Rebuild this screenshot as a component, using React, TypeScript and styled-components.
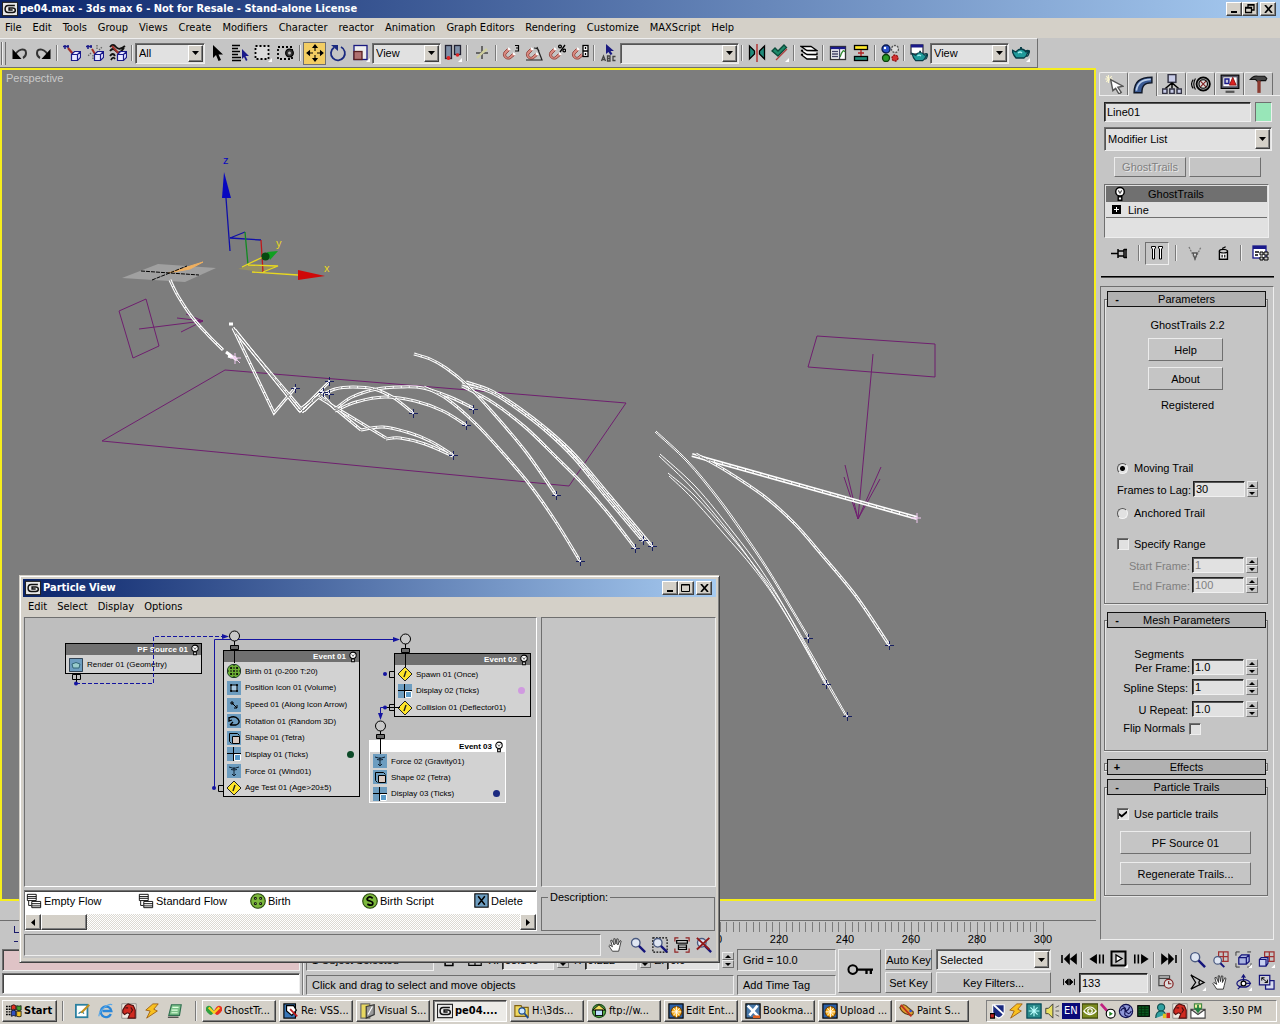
import React from 'react';
import styled, { createGlobalStyle, css } from 'styled-components';

const panelFont = '"Liberation Sans", Arial, sans-serif';
const shellFont = '"DejaVu Sans Condensed", "DejaVu Sans", Tahoma, sans-serif';
const C = {
  face: '#c5c5c5',
  shell: '#d4d0c8',
  field: '#e1e1e1',
  dark: '#6f6f6f',
  wire: '#1414a0',
  node: '#6d9dc0',
};

const Global = createGlobalStyle`
  * { box-sizing: border-box; }
  body { margin: 0; background: ${C.face}; overflow: hidden; }
  button, input, select { font: inherit; color: inherit; margin: 0; }
  svg { display: block; flex: none; }
`;

const raised = css`
  border: 1px solid;
  border-color: #ececec ${C.dark} ${C.dark} #ececec;
`;
const sunken = css`
  border: 1px solid;
  border-color: ${C.dark} #eeeeee #eeeeee ${C.dark};
`;
const classic = css`
  background: ${C.shell};
  border: 1px solid;
  border-color: #fff #404040 #404040 #fff;
  box-shadow: inset -1px -1px #808080;
`;

/* ---------- shell ---------- */
const Page = styled.div`
  position: relative;
  display: flex;
  flex-direction: column;
  min-height: 100vh;
  background: ${C.face};
  color: #000;
  font: 11px/14px ${panelFont};
`;
const TitleBar = styled.header`
  display: flex;
  align-items: center;
  gap: 2px;
  height: 18px;
  padding: 0 4px 0 2px;
  background: linear-gradient(90deg, #0a246a, #a6caf0);
  color: #fff;
  font: bold 11px/18px ${shellFont};
`;
const TitleText = styled.h1`
  flex: 1;
  margin: 0;
  font: inherit;
  white-space: nowrap;
`;
const CapGroup = styled.div`
  display: flex;
`;
const CapButton = styled.button<{ $gap?: boolean }>`
  ${classic}
  display: grid;
  place-items: center;
  width: 16px;
  height: 14px;
  padding: 0;
  margin-left: ${(p) => (p.$gap ? 2 : 0)}px;
`;
const MenuBar = styled.nav<{ $gap: number }>`
  display: flex;
  align-items: center;
  gap: ${(p) => p.$gap}px;
  height: 20px;
  padding-left: 5px;
  background: ${C.shell};
  font: 11px/14px ${shellFont};
`;
const MenuItem = styled.button`
  border: 0;
  background: none;
  padding: 0;
  white-space: nowrap;
`;

/* ---------- toolbar ---------- */
const ToolRow = styled.div`
  display: flex;
  height: 30px;
  background: ${C.face};
`;
const Toolbar = styled.div`
  display: flex;
  align-items: center;
  padding: 0 5px 0 2px;
  border-top: 1px solid #eee;
  border-right: 1px solid ${C.dark};
  border-bottom: 1px solid ${C.dark};
`;
const Grip = styled.span`
  width: 4px;
  height: 23px;
  margin-right: 2px;
  border: 1px solid;
  border-color: #eee ${C.dark} ${C.dark} #eee;
  border-width: 0 1px;
  box-shadow: -1px 0 ${C.dark};
`;
const ToolButton = styled.button<{ $on?: boolean; $w?: number }>`
  display: grid;
  place-items: center;
  width: ${(p) => p.$w ?? 23}px;
  height: 23px;
  padding: 1px 1px 2px 2px;
  border: 1px solid ${(p) => (p.$on ? C.dark : 'transparent')};
  background: ${(p) => (p.$on ? '#f2cd63' : 'none')};
`;
const Sep = styled.span<{ $h?: number }>`
  flex: none;
  width: 2px;
  height: ${(p) => p.$h ?? 16}px;
  margin: 0 2px;
  background: linear-gradient(90deg, #7a7a7a 50%, #eee 50%);
`;
const SelectFrame = styled.span<{ $w?: number; $h: number }>`
  ${sunken}
  display: flex;
  width: ${(p) => (p.$w ? `${p.$w}px` : 'auto')};
  height: ${(p) => p.$h}px;
  padding: 1px;
  background: ${C.field};
  box-shadow: inset 1px 1px #555;
`;
const NativeSelect = styled.select`
  flex: 1;
  min-width: 0;
  appearance: none;
  border: 0;
  background: none;
  padding: 0 2px;
  outline: 0;
`;
const SelectArrow = styled.span`
  ${classic}
  display: grid;
  place-items: center;
  width: 15px;
  pointer-events: none;
`;
const Select = ({ label, value, w, h }: { label: string; value: string; w?: number; h: number }) => (
  <SelectFrame $w={w} $h={h}>
    <NativeSelect aria-label={label} defaultValue={value}>
      <option>{value}</option>
    </NativeSelect>
    <SelectArrow>
      <svg width="7" height="4"><path d="M0 0h7L3.5 4z" /></svg>
    </SelectArrow>
  </SelectFrame>
);

/* ---------- icons ---------- */
const Svg = ({ s = 18, children }: { s?: number; children: React.ReactNode }) => (
  <svg width={s} height={s} viewBox="0 0 18 18" fill="none" stroke="#000" strokeWidth="1.3" aria-hidden="true">
    {children}
  </svg>
);
const flyout = <path d="M18 14v4h-4z" fill="#fff" stroke="none" />;
const magnet = (
  <g>
    <path d="M8 15C3 16 0 12 2 8l4-4 2 2-4 4c-1 2 1 4 3 3l4-4 2 2z" fill="#d98a80" stroke="#8a3a34" strokeWidth=".8" />
    <path d="M6 4l2 2M11 9l2 2" stroke="#fff" strokeWidth="2" />
  </g>
);
const teapot = (
  <g>
    <path d="M4 8L0 6q1 5 4 8h8q3-2 3-4l3-3-4 1q-2-3-5-3T4 8z" fill="#1f9a9a" stroke="#063c46" />
    <path d="M13 7q5-2 4 2t-3 3" stroke="#063c46" />
    <path d="M8 4h2M9 3v2" stroke="#063c46" strokeWidth="1.6" />
    <path d="M6 9q2-2 4 0" stroke="#a8f0f0" />
  </g>
);
const cube = <path d="M8.500 10.500l3-3h6v6l-3 3h-6zM8.500 10.500h6v6M14.500 10.500l3-3" fill="#e8e8ff" stroke="#1a1a8a" strokeWidth="1.2" />;
const hand = (
  <path d="M5 16L1 10l1-1 3 2-2-7 1.500-.5L7 9 6.500 2 8 2l1 6 1-6 1.500.3L11 9l2.500-5 1.300.6L13 12l-1 4z" fill="#fff" stroke="#222" strokeWidth=".9" />
);
const mag = (
  <g>
    <circle cx="6.500" cy="6.500" r="4.800" fill="#dfe6f2" stroke="#4a5a80" strokeWidth="1.5" />
    <path d="M10 10l7 7" stroke="#14147a" strokeWidth="2.6" />
  </g>
);

const icons: Record<string, React.ReactNode> = {
  undo: <><path d="M4 12C6 5 15 3 15 9c0 2-1 4-3 5" stroke="#333" strokeWidth="2" /><path d="M1.500 5v10h9z" fill="#000" stroke="none" /></>,
  redo: <><path d="M14 12C12 5 3 3 3 9c0 2 1 4 3 5" stroke="#333" strokeWidth="2" /><path d="M16.500 5v10h-9z" fill="#000" stroke="none" /></>,
  link: <><path d="M0 2.500h6M2 1v4M5 1v3" stroke="#1a1a8a" strokeWidth="1.500" /><path d="M5 4l5 6" stroke="#a0302a" strokeWidth="2.200" />{cube}</>,
  unlink: <><path d="M0 2.500h6M2 1v4M5 1v3" stroke="#1a1a8a" strokeWidth="1.500" /><path d="M6 5l3 5" stroke="#a0302a" strokeWidth="2" /><path d="M11 1v4M13 6l3-3M5 9l-3 3M7 11v4" stroke="#666" strokeDasharray="1.500 1" />{cube}</>,
  bind: <><path d="M1 3q3-4 6 0t9-1M1 7q3-4 6 0t8-3M1 12q3-4 5 0M2 16q2-4 4-1" stroke="#111" strokeWidth="1.800" /><path d="M3 2l8 9" stroke="#a0302a" strokeWidth="2" />{cube}</>,
  arrow: <path d="M5 1v13l3-3 2.500 6 2.500-1-2.500-5.500H15z" fill="#000" stroke="none" />,
  byname: <><path d="M1 1.500h8M1 4.500h6M1 7.500h8M1 10.500h6M1 13.500h9M1 16.500h9" strokeWidth="1.400" /><path d="M11 5v10l2-2 2 4 1.500-1-2-4H18z" fill="#1a1a8a" stroke="none" /></>,
  rect: <><rect x="1.500" y="2" width="13" height="13" fill="#dcdcdc" strokeWidth="1.800" strokeDasharray="2 2" />{flyout}</>,
  crossing: <><rect x="1" y="3" width="14" height="12" strokeWidth="1.800" strokeDasharray="2 2" /><circle cx="12.500" cy="9" r="3.800" fill="#333" stroke="#000" /><circle cx="12.500" cy="9" r="1.500" fill="#bbb" stroke="none" /></>,
  move: <path d="M9 2v5M9 11v5M2 9h5M11 9h5M7 3.500L9 1l2 2.500zM7 14.500L9 17l2-2.500zM3.500 7L1 9l2.500 2zM14.500 7L17 9l-2.500 2z" fill="#000" strokeWidth="1.100" />,
  rotate: <><path d="M5 3.500a7 7 0 1 0 7-.5" stroke="#1a2a80" strokeWidth="1.800" /><path d="M2 1h7v6z" fill="#1a2a80" stroke="none" /></>,
  scale: <><rect x="2" y="1.500" width="13" height="14" fill="#eee" stroke="#1a1a80" /><rect x="2" y="7.500" width="8" height="8" fill="#b07070" stroke="#5a2020" />{flyout}</>,
  pivot: <><rect x="1.500" y="1.500" width="6" height="13" fill="#7f90a8" stroke="#223" /><rect x="10.500" y="1.500" width="6" height="9" fill="#7f90a8" stroke="#223" /><circle cx="4.500" cy="14" r="2" fill="#d22" stroke="none" /><circle cx="13.500" cy="11" r="1.800" fill="#d22" stroke="none" />{flyout}</>,
  manip: <><path d="M9 2v13M3 9h12" stroke="#666" strokeWidth="2" /><path d="M9 9l5-4M9 9l-5 5" stroke="#d0d0a0" strokeWidth="2.400" /></>,
  snap: <>{magnet}<path d="M13 1.500h3.500v5.500H13M14 4h2.500" strokeWidth="1.200" /></>,
  angle: <>{magnet}<path d="M1 16h16L12 3M9 4q4 0 5 3" stroke="#222" strokeWidth="1.200" /></>,
  percent: <>{magnet}<path d="M17 1l-5 7" /><circle cx="12" cy="2.500" r="1.400" /><circle cx="16.300" cy="6.500" r="1.400" /></>,
  spinsnap: <>{magnet}<rect x="12" y="1.500" width="5" height="11" fill="#fff" /><path d="M12 7h5M14.500 3v2M14.500 9v2" /></>,
  abc: <><path d="M6 0v10l2.500-2 2 3 2-1-2-3H14z" fill="#1a1a80" stroke="none" /><path d="M1.500 17L3.500 12l2 5M2.500 15.500h2.500M7.500 12v5H10v-5zM7.500 14.500H10M15.500 12.500H13v4h2.500" stroke="#444" /></>,
  mirror: <><path d="M1.500 2v13l5-5V7z" fill="#1f8a7a" /><path d="M16.500 2v13l-5-5V7z" fill="#1f8a7a" /><path d="M9 0v18" stroke="#b02020" /></>,
  align: <><path d="M1 7l3-3 3 3 6-6 2.500 2.500L7 12z" fill="#1f8a6a" stroke="#0a4a3a" /><path d="M5 16L16 5" stroke="#b04040" />{flyout}</>,
  layers: <path d="M1 2.500h10l6 4H7zM1 6.500L7 10.500h10v-2M1 10.500l6 4.500h10v-3M1 6.500h2M1 10.500h2" fill="#fff" />,
  curve: <><rect x="1.500" y="2.500" width="15" height="13" fill="#fff" stroke="#333" /><path d="M1.500 4h15" stroke="#1a1a8a" strokeWidth="2.400" /><path d="M3 7.500h6M3 10h6M3 12.500h6M10.500 5v10" stroke="#446" /><path d="M11 13q3-9 5-5" stroke="#383" /></>,
  schem: <><rect x="2.500" y="1.500" width="13" height="4" fill="#ffe92a" /><rect x="2.500" y="12.500" width="13" height="4" fill="#1f8a7a" /><path d="M9 6v6M6 9h6" stroke="#b02020" /></>,
  material: <><circle cx="5" cy="5" r="4" fill="#2a50c8" stroke="#0a1a50" /><circle cx="14" cy="5" r="3.500" fill="#ddd" stroke="#555" strokeDasharray="2 1" /><circle cx="5" cy="14" r="3.500" fill="#2a9a2a" stroke="#0a400a" /><circle cx="14" cy="14" r="3" fill="#d23030" stroke="#901010" strokeDasharray="2 1" /><circle cx="4" cy="4" r="1.200" fill="#fff" stroke="none" /></>,
  render: <><rect x="1" y="1" width="12" height="9" fill="#fff" stroke="#334" /><path d="M1 2h12" stroke="#1a1a8a" strokeWidth="3" /><g transform="translate(2 4) scale(.9)">{teapot}</g></>,
  teapot: <>{teapot}{flyout}</>,
  create: <><path d="M4 1v7M1 4.500h7M2 2l5 5M7 2L2 7" stroke="#fbf6d0" strokeWidth="1" /><path d="M6 5l11 6-4.500 1 3 4.500-2 1.500-3-5L8 15z" fill="#fff" stroke="#555" /></>,
  modify: <><path d="M1 16C1 6 6 2 17 2v5C10 7 8 10 8 16z" fill="#3a5a94" stroke="#101828" /><path d="M3 14C4 7 8 4 16 4" stroke="#b8cce8" strokeWidth="1.600" /></>,
  hierarchy: <><rect x="5.500" y=".5" width="7" height="7" fill="#c8cce8" stroke="#334" /><path d="M9 8v5M9 8L3 13M9 8l6 5" /><path d="M.5 13.500h4v4h-4zM7 13.500h4v4H7zM13.500 13.500h4v4h-4z" fill="#c8cce8" stroke="#334" /></>,
  motion: <><path d="M4 4Q1 9 4 14M2 5Q-1 9 2 13" strokeWidth="1" /><circle cx="11" cy="9" r="6" strokeWidth="1.600" fill="#aaa" /><circle cx="11" cy="9" r="3.800" fill="#ddd" strokeWidth="1" /><path d="M8.500 6.500l5 5M13.500 6.500l-5 5" stroke="#802020" strokeWidth="1" /></>,
  display: <><rect x="1" y="1" width="16" height="12" fill="#556" strokeWidth="1" /><rect x="3" y="3" width="12" height="8" fill="#fff" stroke="none" /><path d="M4.500 4.500h3.500v4H4.500z" fill="#ccd" stroke="#1a1a8a" /><path d="M11.500 3l3 7h-6z" fill="#d22" stroke="#811" strokeWidth=".8" /><path d="M5 16h8" stroke="#555" strokeWidth="2" /></>,
  hammer: <><path d="M1 5q3-4 7-3h6l2 2-1 2h-4l-3 1-2-2z" fill="#444" stroke="#111" strokeWidth="1" /><path d="M9 6v11" stroke="#8a3a30" strokeWidth="3" /></>,
  bulb: <><circle cx="9" cy="6.500" r="4.800" fill="#fff" strokeWidth="1.600" /><path d="M7 5l2 3 2-3" stroke="#555" /><path d="M7 12h4v4H7z" fill="#fff" strokeWidth="1.600" /></>,
  pin: <path d="M0 9.500h7M7 5v9M7 7h6v5H7M13 5v9M15 5v9M13 5.500h3M13 13.500h3" strokeWidth="1.500" />,
  result: <path d="M3.500 2.500h4v1.500l-1 1v10h-2V5l-1-1zM10.500 2.500h4v1.500l-1 1v10h-2V5l-1-1z" fill="#fff" strokeWidth="1" />,
  unique: <><path d="M3 3l6 12 6-12" stroke="#777" strokeDasharray="2 1" /><path d="M7 9h4l-2 6z" fill="#fff" stroke="#555" /></>,
  trash: <><path d="M5 7h9v9H5z" fill="#fff" strokeWidth="1.600" /><ellipse cx="9.500" cy="7" rx="4.500" ry="2" fill="#ccc" strokeWidth="1.400" /><path d="M8 4l4-2M8 11v3M11 11v3" /></>,
  config: <><rect x="2" y="2" width="13" height="12" fill="#fff" stroke="#1a1a8a" /><path d="M2 3.500h13" stroke="#1a1a8a" strokeWidth="3" /><path d="M4 8h4M4 11h3" /><path d="M9 8h3v3H9zM13 8h4v3h-4zM9 13h3v3H9zM13 13h4v3h-4z" fill="#ccc" strokeWidth="1" /></>,
  hand, mag,
  magrect: <><rect x="1" y="1" width="16" height="16" strokeDasharray="2 1.500" />{mag}</>,
  fit: <><path d="M1 5V1h4M13 1h4v4M17 13v4h-4M5 17H1v-4" stroke="#902020" /><path d="M3 4h12v3H3zM5 9h9v5H5z" fill="#fff" strokeWidth="1.400" /><path d="M5 11.500h9" /></>,
  nozoom: <>{mag}<path d="M1 1l14 13M15 1L1 14" stroke="#901818" strokeWidth="2.200" /></>,
  lock: <path d="M4 8h10v8H4zM6 8V4h6v4" fill="#ccc" strokeWidth="2" />,
  absrel: <path d="M2 3h14v12H2zM9 3v12M2 11h14" />,
  first: <path d="M2 5v8M9 5v8L5 9zM16 5v8l-5-4z" fill="#000" strokeWidth="1.600" />,
  prev: <path d="M8 5v8L2 9z M12 4v10M16 4v10" fill="#000" strokeWidth="1.800" />,
  play: <><rect x="1.500" y="1.500" width="14" height="14" strokeWidth="2" /><path d="M6 5v7l6-3.500z" fill="#fff" />{flyout}</>,
  next: <path d="M10 5v8l6-4z M2 4v10M6 4v10" fill="#000" strokeWidth="1.800" />,
  last: <path d="M16 5v8M9 5v8l4-4zM2 5v8l5-4z" fill="#000" strokeWidth="1.600" />,
  keymode: <path d="M2 5v8M8 5v8L4 9zM16 5v8M10 5v8l4-4z" fill="#000" strokeWidth="1.200" />,
  time: <><path d="M1 2h12v11H1zM1 5h12" stroke="#444" /><circle cx="12" cy="11" r="5" fill="#ddd" stroke="#802020" /><path d="M12 8v3h3" stroke="#802020" /></>,
  magall: <><path d="M7 1h10v10H7zM12 1v10M7 6h10" stroke="#a03030" /><circle cx="6" cy="10" r="4" fill="#dfe6f2" stroke="#4a5a80" /><path d="M9 13l4 4" stroke="#14147a" strokeWidth="2" /></>,
  extents: <><path d="M1 5V1h4M13 1h4M1 13v4h4M17 13v4h-4" stroke="#333" strokeWidth="1" /><path d="M4 7l3-3h8v7l-3 3H4zM4 7h8v7M12 7l3-3" fill="#aab4e0" stroke="#14147a" />{flyout}</>,
  extall: <><path d="M7 1h10v10H7zM12 1v10M7 6h10" stroke="#a03030" /><path d="M1.500 9l2-2h7v6l-2 3h-7zM1.500 9h7v7" fill="#c8d0f0" stroke="#14147a" />{flyout}</>,
  fov: <><path d="M2 1l14 8L2 16M12 6q-3 3 0 6M2 1l5 8-5 7" />{flyout}</>,
  arc: <><ellipse cx="9" cy="10" rx="7" ry="4" stroke="#14147a" /><path d="M9 1v9l-6 6M9 10h8M7 4l2-3 2 3" stroke="#14147a" /><circle cx="9" cy="10" r="2.500" fill="#fff" />{flyout}</>,
  maximize: <><path d="M8 7h9v9H8z" fill="#d8dcf0" stroke="#14147a" /><path d="M1.500 1.500h11v10h-11z" fill="#d0d0d8" stroke="#14147a" /><path d="M4 4l6 5M4 7V4h3M10 6v3H7" strokeWidth="1" /></>,
  key: <><circle cx="4" cy="8" r="3" strokeWidth="1.400" /><path d="M7 8h11M13.500 8v3M16.500 8v3" strokeWidth="1.600" /></>,
  flow: <><path d="M1.500 1.500h10v7h-10zM1.500 4h10M1.500 6h10M6.500 9.500h10v7h-10zM6.500 12h10M6.500 14.500h10M3 9v5h3" fill="#fff" strokeWidth="1" /></>,
  birth: <><circle cx="9" cy="9" r="8.200" fill="#7cb83c" stroke="#2a4a10" /><path d="M5 5h2v2H5zM11 5h2v2h-2zM5 11h2v2H5zM11 11h2v2h-2z" strokeWidth="1" fill="#d8f0b0" /></>,
  script: <><circle cx="9" cy="9" r="8.200" fill="#7cb83c" stroke="#2a4a10" /><path d="M12 6Q9 3 6.500 5.500T9 9q4 1 3 3.500T6 12.500" strokeWidth="2" /></>,
  del: <><rect x="1" y="1" width="16" height="16" fill={C.node} /><path d="M5 4l8 10M13 4L5 14" strokeWidth="1.800" /></>,
  max: <><rect x=".5" y="1.500" width="17" height="15" fill="#e8e8e8" stroke="#222" /><path d="M14.500 5H7Q3.500 5 3.500 9T7 13h5q3 0 3-2.500T12 8H8v2h4" stroke="#111" strokeWidth="1.700" /></>,
  windows: <><path d="M6 3q3-2 5 0v5q-2-2-5 0z" fill="#e03020" stroke="#000" strokeWidth=".8" /><path d="M12 3q3 1 5 0v5q-2 1-5 0z" fill="#40a030" stroke="#000" strokeWidth=".8" /><path d="M6 9q3-2 5 0v6q-2-2-5 0z" fill="#3050c0" stroke="#000" strokeWidth=".8" /><path d="M12 9q3 1 5 0v6q-2 1-5 0z" fill="#f0c020" stroke="#000" strokeWidth=".8" /><path d="M0 4h2M3 4h2M0 7h2M3 7h2M0 10h2M3 10h2M0 13h2M3 13h2" strokeWidth="1.600" /></>,
  note: <><rect x="1" y="2" width="13" height="14" fill="#fff" stroke="#2a80a0" strokeWidth="2" /><path d="M4 12q4-4 6 0" stroke="#2a80a0" /><path d="M7 11L16 2" stroke="#c09020" strokeWidth="2.500" /></>,
  ie: <><path d="M14.500 12.500A6 6 0 1 1 15 9H5" stroke="#2a86d8" strokeWidth="2.600" /><path d="M1 15C1 9 11 0 16 2" stroke="#58a8e8" strokeWidth="1.400" /></>,
  horse: <><rect x="1" y="1" width="16" height="16" fill="#f0e8e0" stroke="#555" strokeWidth=".6" /><path d="M2 8l3-5 3-2 6 2 2 5v9H8l2-5-3-1-3 2-2-2z" fill="#d02a20" stroke="#501010" /><path d="M5 5.500h3M11 5l2 3-2 3" stroke="#501010" /></>,
  bolt: <path d="M10 1L2 8l5 1-4 8L15 9l-4-2 5-6z" fill="#f8c020" stroke="#a06010" strokeWidth="1" />,
  pad: <><path d="M5 2h11l-2 12H2z" fill="#7ac088" stroke="#307050" /><path d="M6 5h7M5 8h7M5 11h7" stroke="#e0ffe0" /><path d="M1 16h12" stroke="#333" /></>,
  butterfly: <><path d="M9 9Q5 1 1 4t3 9q3 2 5-4z" fill="#30a040" stroke="none" /><path d="M9 9q4-8 8-5t-3 9q-3 2-5-4z" fill="#e83020" stroke="none" /><path d="M3 5l6 6 6-6" stroke="#f8d020" strokeWidth="2.500" /></>,
  mail: <><rect x="1" y="1" width="13" height="16" fill="#3a78b8" /><path d="M4 3h8l3 5-5 6-6-5z" fill="#fff" /><path d="M8 7l8 8" stroke="#c02020" strokeWidth="2" /></>,
  source: <><rect x="1" y="1" width="10" height="16" fill="#e8d860" stroke="#666" /><path d="M7 4l9-2v11l-9 4z" fill="#999" stroke="#333" /><path d="M9 13l5-9" stroke="#fff" /></>,
  folder: <><path d="M1 3h7l1 2h7v10H1z" fill="#f0d860" stroke="#806010" /><circle cx="9" cy="9" r="3.500" fill="#cfe8ff" stroke="#1a4a90" /><path d="M12 12l4 5" stroke="#1a4a90" strokeWidth="2" /></>,
  ftp: <><circle cx="9" cy="9" r="7.500" fill="#58b048" stroke="#205020" /><path d="M2 8l7-6 7 6z" fill="#f0e060" strokeWidth="1" /><rect x="5" y="8" width="8" height="6" fill="#bfe0ff" strokeWidth="1" /></>,
  web: <><rect x="1" y="1" width="16" height="16" fill="#2a60a8" /><circle cx="9.500" cy="10" r="6" fill="#f8b020" stroke="#704000" /><path d="M9.500 4v12M4 10h11M6 6l7 8M13 6l-7 8" stroke="#fff" strokeWidth="1" /></>,
  moz: <><rect x="1" y="1" width="16" height="16" fill="#4878a8" /><path d="M3 3l12 12M14 3L5 14" stroke="#fff" strokeWidth="3" /><path d="M9 14h8v3H9z" fill="#e06020" stroke="none" /></>,
  paint: <><path d="M1 5q4-6 9 0l6 5q1 5-6 3T1 5z" fill="#e0a030" stroke="#604010" /><path d="M2 2l12 13" stroke="#c03020" strokeWidth="2" /><circle cx="13" cy="9" r="1.500" fill="#3050d0" stroke="none" /></>,
  shield: <><path d="M3 2h13v8q-1 5-6 7-6-2-7-7z" fill="#1a2a80" stroke="#fff" /><path d="M4 2l12 11" stroke="#fff" strokeWidth="2" /><path d="M0 12h5v5H0z" fill="#c02020" /></>,
  net: <><rect x="1" y="1" width="16" height="16" fill="#2a8a8a" stroke="#045" /><path d="M9 3v12M3 9h12M5 5l8 8M13 5l-8 8" stroke="#bff" /></>,
  speaker: <><path d="M2 6h3l5-5v16l-5-5H2z" fill="#e8e060" stroke="#333" strokeWidth="1" /><path d="M13 5l4-2M13 9h4M13 13l4 2" stroke="#555" strokeWidth="1" /></>,
  nvidia: <><rect x="0" y="1" width="18" height="16" fill="#7a8a20" stroke="#343c08" /><path d="M2 9q7-9 14 0-7 8-14 0z" stroke="#fff" /><circle cx="9" cy="9" r="2.500" stroke="#fff" /></>,
  quick: <><path d="M1 1l8 9" stroke="#c02080" strokeWidth="3" /><circle cx="12" cy="12" r="5" fill="#fff" /><path d="M10.500 9.500v5l4-2.500z" fill="#208020" stroke="none" /></>,
  swirl: <><circle cx="9" cy="9" r="7.500" fill="#9098d8" stroke="#101050" /><path d="M3 9q3-6 6 0t6 0M5 4q5 1 3 6t4 5M13 4q-1 5-6 5" stroke="#101050" /></>,
  meter: <><rect x="2" y="3" width="13" height="12" fill="#0a5a20" /><path d="M3 6h11M3 9h11M3 12h11M6 3v12M10 3v12" stroke="#042a0a" strokeWidth="1" /></>,
  person: <><circle cx="8" cy="5" r="4" fill="#30a0a0" stroke="#105050" /><path d="M2 17q0-8 6-8 4 0 5 4" fill="#30a0a0" stroke="#105050" /><path d="M10 12h4v5h-4z" fill="#e0c020" stroke="none" /><path d="M14 11h4v6h-4z" fill="#d02020" stroke="none" /></>,
  inbox: <><path d="M1 7h16v10H1zM1 7l8 6 8-6" fill="#fff" stroke="#444" /><path d="M5 1h8v5H5z" fill="#f0f0a0" stroke="#484" /><path d="M9 2v7M6 6l3 4 3-4" stroke="#208040" strokeWidth="2" /></>,
};
const Icon = ({ name, s }: { name: string; s?: number }) => <Svg s={s}>{icons[name]}</Svg>;

const Min = () => <svg width="9" height="8"><path d="M1 6h6v2H1z" /></svg>;
const Max = () => <svg width="10" height="10"><path d="M.5 1.500h8v7h-8zM.5 2h8" fill="none" stroke="#000" /></svg>;
const Restore = () => <svg width="10" height="10"><path d="M3 3V.5h6V6H7M.5 3.500h6v5h-6zM3 1h6M1 4h6" fill="none" stroke="#000" strokeWidth="1.300" /></svg>;
const Close = () => <svg width="9" height="8"><path d="M1 0l7 8M8 0L1 8" stroke="#000" strokeWidth="1.700" /></svg>;

/* ---------- viewport ---------- */
const Main = styled.main`
  flex: 1;
  display: flex;
  min-height: 0;
`;
const Stage = styled.div`
  flex: 1;
  min-width: 0;
  display: flex;
  flex-direction: column;
`;
const Viewport = styled.section`
  flex: 1;
  display: grid;
  min-height: 0;
  overflow: hidden;
  border: 2px solid #f6ee1c;
  background: #7d7d7d;
  color: #c9c9c9;
  & > * { grid-area: 1 / 1; min-width: 0; min-height: 0; }
`;
const ViewLabel = styled.span`
  padding: 1px 4px;
`;
const Scene = styled.svg`
  width: 100%;
  height: 100%;
`;

type Pt = [number, number];
const spline = (p: Pt[]) => {
  let d = `M${p[0]}`;
  for (let i = 0; i < p.length - 1; i++) {
    const a = p[Math.max(i - 1, 0)], b = p[i], c = p[i + 1], e = p[Math.min(i + 2, p.length - 1)];
    d += `C${b[0] + (c[0] - a[0]) / 6},${b[1] + (c[1] - a[1]) / 6} ${c[0] - (e[0] - b[0]) / 6},${c[1] - (e[1] - b[1]) / 6} ${c}`;
  }
  return d;
};
const trails: string[] = [
  spline([[170, 280], [178, 296], [192, 317], [208, 335], [223, 350]]),
  'M233 328L274 413L295 388',
  'M233 328L300 411L329 382',
  'M234 330L303 411L323 391',
  'M235 330L299 410L321 394L335 409',
  'M302 412L320 396L361 430',
  'M304 411L318 397L386 438',
  spline([[320, 396], [335, 389], [353, 387], [374, 389], [394, 398], [413, 413]]),
  spline([[335, 409], [352, 397], [377, 389], [400, 387], [423, 388], [450, 397], [473, 408]]),
  spline([[335, 411], [356, 402], [385, 397], [415, 401], [443, 411], [466, 425]]),
  spline([[361, 430], [383, 427], [410, 433], [432, 442], [453, 455]]),
  spline([[386, 439], [400, 438], [425, 444], [453, 456]]),
  spline([[414, 354], [430, 359], [446, 368], [467, 385], [495, 415], [526, 452], [556, 495]]),
  spline([[424, 387], [447, 399], [475, 423], [502, 452], [530, 485], [556, 522], [580, 561]]),
  spline([[462, 386], [492, 402], [525, 427], [556, 457], [580, 481], [608, 513], [635, 548]]),
  spline([[466, 382], [492, 391], [518, 407], [548, 430], [576, 456], [610, 496], [652, 546]]),
  spline([[462, 384], [490, 392], [516, 408], [546, 431], [574, 458], [606, 497], [643, 541]]),
  spline([[696, 454], [728, 472], [765, 497], [795, 524], [822, 555], [856, 596], [889, 645]]),
];
const thinTrails: string[] = [
  spline([[655, 432], [687, 462], [716, 497], [742, 533], [769, 573], [808, 638]]),
  spline([[656, 431], [688, 461], [718, 497], [744, 533], [770, 572], [809, 637]]),
  spline([[660, 454], [696, 487], [733, 532], [760, 568], [786, 610], [826, 684]]),
  spline([[659, 456], [693, 489], [730, 533], [757, 570], [784, 611], [825, 684]]),
  spline([[668, 473], [695, 496], [728, 533], [757, 569], [786, 610], [847, 716]]),
  spline([[669, 476], [692, 498], [724, 534], [754, 569], [784, 612], [845, 715]]),
];
const ticks: Pt[] = [[295, 388], [329, 381], [323, 392], [329, 394], [413, 413], [473, 409], [466, 425], [453, 455], [556, 495], [580, 561], [635, 548], [643, 540], [652, 546], [808, 638], [826, 684], [847, 716], [889, 645]];

const SceneDrawing = () => (
  <Scene viewBox="2 70 1092 829" preserveAspectRatio="xMinYMin slice" fill="none" role="img" aria-label="Particle scene">
    <path d="M122 278L158 264L216 268L185 282Z" fill="#a0a0a0" />
    <path d="M168 273L203 262L190 269Z" fill="#f0b060" stroke="#f0b060" />
    <path d="M141 271L199 275M152 280L187 266" stroke="#000" strokeDasharray="4 1" />
    <path d="M238 269L248 265L278 266L263 272Z" fill="#a89c50" opacity=".6" />
    <g stroke="#6f1f6f">
      <path d="M102 441L225 370L626 403L569 486Z" />
      <path d="M119 311L146 299L159 346L133 358Z" />
      <path d="M139 329L203 321M177 318L203 321L186 314M181 332L203 321" />
      <path d="M817 336L935 344V377L808 367Z" />
      <path d="M873 354L858 519M845 465L858 519L844 477M881 467L858 519L880 479" />
    </g>
    <g stroke="#fff" strokeWidth="3">
      {trails.map((d, i) => <path key={i} d={d} />)}
      <path d="M692 455L917 518" strokeWidth="4" />
    </g>
    <g stroke="#858585" strokeDasharray="7 1">
      {trails.map((d, i) => <path key={i} d={d} />)}
      <path d="M692 455L917 518" />
    </g>
    <g stroke="#fff">
      {thinTrails.map((d, i) => <path key={i} d={d} />)}
    </g>
    <g stroke="#182060">
      {ticks.map(([x, y], i) => <path key={i} d={`M${x - 4} ${y}.5h9M${x}.5 ${y - 4}v9`} />)}
    </g>
    <g fill="#d8d8e8">
      {ticks.map(([x, y], i) => <path key={i} d={`M${x - 1} ${y - 1}h2v2h-2z`} />)}
    </g>
    <path d="M229 324h4M226 352l11 8M228 356l8 2" stroke="#fff" strokeWidth="3" />
    <path d="M230 358h11M235 353v11M231 354l9 9M911 518h10M917 513v10" stroke="#f0c8f0" />
    <path d="M226 198L230 251M230 238L245 232M230 238L261 240" stroke="#1010a8" strokeWidth="1.300" />
    <path d="M245 232L248 265" stroke="#108a20" strokeWidth="1.300" />
    <path d="M261 240L263 272" stroke="#c01818" strokeWidth="1.300" />
    <path d="M248 265L278 266L263 272M242 267L263 257M252 272L298 275" stroke="#e8d820" strokeWidth="1.300" />
    <path d="M224 172L222 198H231Z" fill="#0808c0" />
    <path d="M298 270L325 276L298 280Z" fill="#d00808" />
    <path d="M267 252L278 251L270 260Z" fill="#10a020" />
    <circle cx="265.500" cy="256.500" r="4" fill="#064a10" />
    <g fontFamily="Liberation Sans, Arial, sans-serif" fontSize="11">
      <text x="223" y="164" fill="#0808c0">z</text>
      <text x="276" y="247" fill="#e8d820">y</text>
      <text x="324" y="272" fill="#e8d820">x</text>
    </g>
  </Scene>
);

/* ---------- track bar ---------- */
const TrackBar = styled.div`
  height: 44px;
  padding-top: 19px;
  overflow: hidden;
`;
const Ruler = styled.div`
  display: grid;
  height: 25px;
  border-top: 1px solid ${C.dark};
  & > * { grid-area: 1 / 1; }
`;
const RulerLabels = styled.div`
  display: flex;
  padding: 11px 0 0 20px;
  span { flex: 0 0 66px; text-align: center; }
`;
const frames = Array.from({ length: 151 }, (_, i) => i);
const TimeRuler = () => (
  <TrackBar>
    <Ruler>
      <svg width="1090" height="24" stroke="#7c7c7c" shapeRendering="crispEdges" fill="none">
        {frames.map((i) => <path key={i} d={`M${53.5 + i * 6.6} 1V${i % 10 ? 11 : 24}`} />)}
        <path d="M14.500 5v6h6M14 20h4" stroke="#1a1a6a" />
      </svg>
      <RulerLabels>
        {Array.from({ length: 16 }, (_, i) => <span key={i}>{i * 20}</span>)}
      </RulerLabels>
    </Ruler>
  </TrackBar>
);

/* ---------- command panel ---------- */
const Command = styled.aside`
  flex: 0 0 184px;
  display: flex;
  flex-direction: column;
  min-width: 0;
  padding: 4px 0 5px 3px;
`;
const Tabs = styled.div`
  display: flex;
  height: 24px;
  border-bottom: 1px solid #eee;
`;
const Tab = styled.button<{ $on?: boolean }>`
  display: grid;
  place-items: center;
  width: 29px;
  height: ${(p) => (p.$on ? 24 : 23)}px;
  padding: 0;
  border: 1px solid;
  border-color: #eee ${C.dark} transparent #eee;
  border-bottom: 0;
  border-radius: 2px 2px 0 0;
  background: ${C.face};
`;
const PanelHead = styled.div`
  display: flex;
  flex-direction: column;
  padding: 6px 8px 0 5px;
`;
const NameRow = styled.div`
  display: flex;
  gap: 4px;
  margin-bottom: 5px;
`;
const Field = styled.input<{ $w?: number; $h?: number }>`
  width: ${(p) => (p.$w ? `${p.$w}px` : 'auto')};
  flex: ${(p) => (p.$w ? 'none' : '1')};
  min-width: 0;
  height: ${(p) => p.$h ?? 16}px;
  padding: 0 2px;
  border: 1px solid;
  border-color: #222 #f0f0f0 #f0f0f0 #222;
  box-shadow: inset 1px 1px #555;
  background: ${C.field};
  outline: 0;
  &:disabled { color: #808080; }
`;
const Swatch = styled.button`
  flex: none;
  width: 17px;
  height: 20px;
  padding: 0;
  background: #98e6b8;
  ${sunken}
`;
const Flat = styled.button<{ $w: number; $h: number }>`
  ${raised}
  width: ${(p) => p.$w}px;
  height: ${(p) => p.$h}px;
  padding: 0;
  background: none;
  white-space: nowrap;
  &:disabled { color: #808080; text-shadow: 1px 1px #e8e8e8; }
`;
const SetRow = styled.div`
  display: flex;
  gap: 3px;
  padding: 6px 0 7px 10px;
`;
const Stack = styled.ul`
  ${sunken}
  width: 165px;
  height: 54px;
  margin: 0;
  padding: 1px;
  list-style: none;
  background: ${C.field};
`;
const StackItem = styled.li<{ $on?: boolean }>`
  display: flex;
  align-items: center;
  gap: ${(p) => (p.$on ? 20 : 7)}px;
  height: 16px;
  padding-left: 6px;
  background: ${(p) => (p.$on ? '#707070' : 'none')};
  border-bottom: ${(p) => (p.$on ? 0 : 1)}px solid ${C.dark};
`;
const StackTools = styled.div`
  display: flex;
  align-items: center;
  justify-content: space-between;
  height: 24px;
  padding: 0 0 0 4px;
  margin-top: 3px;
`;
const StackTool = styled.button<{ $on?: boolean }>`
  display: grid;
  place-items: center;
  width: 24px;
  height: 23px;
  padding: 0;
  background: none;
  border: 1px solid transparent;
  ${(p) => p.$on && sunken}
`;
const Rule = styled.hr`
  flex: none;
  width: 173px;
  height: 2px;
  margin: 11px 0 8px 2px;
  border: 0;
  background: #000;
  border-bottom: 1px solid #555;
`;
const Rollouts = styled.div`
  flex: 1;
  margin: 0 6px 0 1px;
  padding: 4px 5px 0 3px;
  border: 1px solid;
  border-color: ${C.dark} #eee #eee ${C.dark};
`;
const RollBox = styled.section`
  margin-bottom: 8px;
`;
const RollHead = styled.button`
  position: relative;
  display: grid;
  grid-template-columns: 10px 1fr 10px;
  align-items: center;
  width: calc(100% - 5px);
  height: 16px;
  margin: 0 3px;
  padding: 0 4px;
  border: 1px solid #111;
  background: #b1b1b1;
  line-height: 12px;
`;
const RollBody = styled.div<{ $open: boolean }>`
  display: flex;
  flex-direction: column;
  margin-top: ${(p) => (p.$open ? -8 : -12)}px;
  height: ${(p) => (p.$open ? 'auto' : '8px')};
  padding: ${(p) => (p.$open ? '8px 9px 10px 12px' : 0)};
  border: 1px solid ${C.dark};
  box-shadow: inset 1px 1px #e6e6e6, 0 1px #e6e6e6;
`;
const Rollout = ({ title, open = true, children }: { title: string; open?: boolean; children?: React.ReactNode }) => (
  <RollBox>
    <RollHead aria-expanded={open}>
      <b>{open ? '-' : '+'}</b>
      <span>{title}</span>
    </RollHead>
    <RollBody $open={open}>{children}</RollBody>
  </RollBox>
);
const Line = styled.div<{ $mt: number; $align?: string; $pr?: number }>`
  display: flex;
  align-items: flex-end;
  justify-content: ${(p) => p.$align ?? 'flex-start'};
  gap: 2px;
  margin-top: ${(p) => p.$mt}px;
  padding-right: ${(p) => p.$pr ?? 0}px;
`;
const Caption = styled.label<{ $off?: boolean; $indent?: number }>`
  color: ${(p) => (p.$off ? '#808080' : 'inherit')};
  padding-right: ${(p) => p.$indent ?? 0}px;
  line-height: 14px;
  text-align: right;
  white-space: pre;
`;
const Choice = styled.label`
  display: flex;
  align-items: center;
  gap: 5px;
  height: 14px;
`;
const Radio = styled.input`
  appearance: none;
  width: 11px;
  height: 11px;
  margin-right: 1px;
  border-radius: 50%;
  ${sunken}
  border-color: #555 #f4f4f4 #f4f4f4 #555;
  background: ${C.field};
  &:checked { background: radial-gradient(circle, #000 0 2px, ${C.field} 3px); }
`;
const Check = styled.input`
  appearance: none;
  display: grid;
  place-items: center;
  width: 12px;
  height: 12px;
  ${sunken}
  box-shadow: inset 1px 1px #555;
  background: ${C.field};
  &:checked::before {
    content: '';
    width: 8px;
    height: 7px;
    background: #000;
    clip-path: polygon(0 35%, 35% 65%, 100% 0, 100% 35%, 35% 100%, 0 70%);
  }
`;
const SpinBox = styled.span`
  display: flex;
  flex-direction: column;
  width: 12px;
`;
const SpinButton = styled.button`
  ${raised}
  display: grid;
  place-items: center;
  height: 8px;
  padding: 0;
  background: ${C.face};
`;
const Spin = () => (
  <SpinBox>
    <SpinButton aria-label="Increase"><svg width="6" height="3"><path d="M0 3h6L3 0z" /></svg></SpinButton>
    <SpinButton aria-label="Decrease"><svg width="6" height="3"><path d="M0 0h6L3 3z" /></svg></SpinButton>
  </SpinBox>
);
const SpinRow = ({ id, label, value, mt, off, gap }: { id: string; label: string; value: string; mt: number; off?: boolean; gap?: number }) => (
  <Line $mt={mt} $align="flex-end">
    <Caption htmlFor={id} $off={off} $indent={gap}>{label}</Caption>
    <Field id={id} $w={52} defaultValue={value} disabled={off} />
    <Spin />
  </Line>
);
const ButtonStack = styled.div<{ $mt: number; $gap: number }>`
  display: flex;
  flex-direction: column;
  align-items: center;
  gap: ${(p) => p.$gap}px;
  margin-top: ${(p) => p.$mt}px;
  padding-right: 4px;
`;
const Plus = () => <svg width="9" height="9"><path d="M0 0h9v9H0z" /><path d="M2 4.500h5M4.500 2v5" stroke="#fff" /></svg>;

const CommandPanel = () => (
  <Command>
    <Tabs>
      {['create', 'modify', 'hierarchy', 'motion', 'display', 'hammer'].map((n, i) => (
        <Tab key={n} $on={i === 1} aria-label={n}><Icon name={n} s={20} /></Tab>
      ))}
    </Tabs>
    <PanelHead>
      <NameRow>
        <Field $h={20} defaultValue="Line01" aria-label="Object name" />
        <Swatch aria-label="Object color" />
      </NameRow>
      <Select label="Modifier List" value="Modifier List" h={24} />
      <SetRow>
        <Flat $w={72} $h={20} disabled>GhostTrails</Flat>
        <Flat $w={72} $h={20} aria-label="Empty modifier button" />
      </SetRow>
      <Stack>
        <StackItem $on><Icon name="bulb" s={16} />GhostTrails</StackItem>
        <StackItem><Plus />Line</StackItem>
      </Stack>
      <StackTools>
        <StackTool aria-label="Pin stack"><Icon name="pin" /></StackTool>
        <Sep />
        <StackTool $on aria-label="Show end result"><Icon name="result" /></StackTool>
        <Sep />
        <StackTool aria-label="Make unique"><Icon name="unique" /></StackTool>
        <StackTool aria-label="Remove modifier"><Icon name="trash" s={16} /></StackTool>
        <Sep />
        <StackTool aria-label="Configure sets"><Icon name="config" /></StackTool>
      </StackTools>
    </PanelHead>
    <Rule />
    <Rollouts>
      <Rollout title="Parameters">
        <Line $mt={10} $align="center">GhostTrails 2.2</Line>
        <ButtonStack $mt={6} $gap={6}>
          <Flat $w={75} $h={23}>Help</Flat>
          <Flat $w={75} $h={23}>About</Flat>
        </ButtonStack>
        <Line $mt={8} $align="center">Registered</Line>
        <Line $mt={49}><Choice><Radio type="radio" name="trail" defaultChecked />Moving Trail</Choice></Line>
        <SpinRow id="lag" label="Frames to Lag:" value="30" mt={6} />
        <Line $mt={9}><Choice><Radio type="radio" name="trail" />Anchored Trail</Choice></Line>
        <Line $mt={17}><Choice><Check type="checkbox" />Specify Range</Choice></Line>
        <SpinRow id="start" label="Start Frame:" value="1" mt={6} off />
        <SpinRow id="end" label="End Frame:" value="100" mt={4} off />
      </Rollout>
      <Rollout title="Mesh Parameters">
        <SpinRow id="seg" label={'Segments  \nPer Frame:'} value="1.0" mt={18} />
        <SpinRow id="steps" label="Spline Steps:" value="1" mt={4} gap={2} />
        <SpinRow id="urep" label="U Repeat:" value="1.0" mt={6} gap={2} />
        <Line $mt={4} $align="flex-end" $pr={57}>
          <Caption htmlFor="flip" $indent={2}>Flip Normals</Caption>
          <Check id="flip" type="checkbox" />
        </Line>
        <Line $mt={5} />
      </Rollout>
      <Rollout title="Effects" open={false} />
      <Rollout title="Particle Trails">
        <Line $mt={11}><Choice><Check type="checkbox" defaultChecked />Use particle trails</Choice></Line>
        <ButtonStack $mt={10} $gap={8}>
          <Flat $w={131} $h={23}>PF Source 01</Flat>
          <Flat $w={131} $h={23}>Regenerate Trails...</Flat>
        </ButtonStack>
      </Rollout>
    </Rollouts>
  </Command>
);

/* ---------- particle view ---------- */
const Floating = styled.section`
  position: absolute;
  left: 19px;
  top: 575px;
  display: flex;
  flex-direction: column;
  width: 701px;
  height: 388px;
  padding: 3px 3px 4px;
  background: ${C.shell};
  border: 1px solid;
  border-color: ${C.shell} #404040 #404040 ${C.shell};
  box-shadow: inset 1px 1px #fff, inset -1px -1px #808080;
`;
const PvBody = styled.div`
  flex: 1;
  display: grid;
  grid-template-columns: 513px 1fr;
  grid-template-rows: 270px 41px 22px;
  column-gap: 4px;
  row-gap: 3px;
  padding-left: 1px;
  background: ${C.face};
`;
const Canvas = styled.div`
  position: relative;
  border: 1px solid;
  border-color: ${C.dark} #fff #fff ${C.dark};
  background: #bebebe;
`;
const Side = styled.div`
  ${sunken}
`;
const NodeBox = styled.article<{ $x: number; $y: number; $h: number; $sel?: boolean }>`
  position: absolute;
  left: ${(p) => p.$x - 25}px;
  top: ${(p) => p.$y - 618}px;
  display: flex;
  flex-direction: column;
  width: 137px;
  height: ${(p) => p.$h}px;
  border: 1px solid ${(p) => (p.$sel ? '#fff' : '#000')};
  background: #d2d2d2;
  font: 8px/11px ${panelFont};
`;
const NodeHead = styled.header<{ $sel?: boolean }>`
  display: flex;
  justify-content: flex-end;
  align-items: center;
  gap: 1px;
  height: 11px;
  background: ${(p) => (p.$sel ? '#fff' : '#707070')};
  color: ${(p) => (p.$sel ? '#000' : '#fff')};
  font-weight: bold;
`;
const NodeRows = styled.ul`
  flex: 1;
  display: grid;
  grid-auto-rows: 1fr;
  margin: 0;
  padding: 1px 5px 0 3px;
  list-style: none;
`;
const NodeRow = styled.li`
  display: grid;
  grid-template-columns: 14px 1fr auto;
  column-gap: 4px;
  align-items: center;
  white-space: nowrap;
`;
const Dot = styled.i<{ $c: string }>`
  width: 7px;
  height: 7px;
  border-radius: 50%;
  background: ${(p) => p.$c};
`;
const tile = <path d="M0 0h14v14H0z" fill={C.node} />;
const opIcons: Record<string, React.ReactNode> = {
  render: <>{tile}<path d="M.5.5h13v13H.5z" stroke="#345" /><path d="M3 6q4-3 8 0l-1 4H4z" fill="#9cc" stroke="#367" /></>,
  birth: <><circle cx="7" cy="7" r="6.800" fill="#6cb034" stroke="#243" /><path d="M7 0v14M0 7h14" stroke="#111" strokeDasharray="2 1" /><path d="M4 4h.1M10 4h.1M4 10h.1M10 10h.1" stroke="#000" strokeWidth="2" strokeLinecap="round" /></>,
  position: <>{tile}<path d="M4 4h6v6H4z" stroke="#000" fill="#a8c8e0" /><path d="M4 4h.1M10 4h.1M4 10h.1M10 10h.1" stroke="#000" strokeWidth="2" strokeLinecap="round" /></>,
  speed: <>{tile}<path d="M5 5l5 5M4 4h2v2H4zM10 7v3H7" stroke="#000" /></>,
  rotation: <>{tile}<path d="M2 4q6-3 9 1t-2 6H3M2 3v4l3-1M3 11l3-3" stroke="#000" strokeWidth="1.300" /></>,
  shape: <>{tile}<path d="M2.500 10.500v-8h8l2 2M2.500 10.500l2 2" stroke="#000" /><path d="M5.500 5.500h7v7h-7z" fill="#d8c8c0" stroke="#000" /></>,
  display: <>{tile}<path d="M6.500 0v14M0 6.500h14" stroke="#000" /><path d="M7.500 7.500h6v6h-6z" stroke="#fff" fill="#5a9ac8" /></>,
  force: <>{tile}<path d="M2 3q5 3 10 0M4 5.500q3 1 6 0M7 3v9M5 10l2 2 2-2" stroke="#123" /></>,
  test: <><path d="M7 0l7 7-7 7-7-7z" fill="#ffe528" stroke="#222" /><path d="M8 4l-2 6" stroke="#222" strokeWidth="1.400" /></>,
};
const OpIcon = ({ n }: { n: string }) => <svg width="14" height="14" fill="none" aria-hidden="true">{opIcons[n]}</svg>;

type Op = [string, string, string?];
type NodeData = { title: string; x: number; y: number; h: number; sel?: boolean; ops: Op[] };
const nodes: NodeData[] = [
  { title: 'PF Source 01', x: 65, y: 643, h: 31, ops: [['render', 'Render 01 (Geometry)']] },
  {
    title: 'Event 01', x: 223, y: 650, h: 147, ops: [
      ['birth', 'Birth 01 (0-200 T:20)'], ['position', 'Position Icon 01 (Volume)'], ['speed', 'Speed 01 (Along Icon Arrow)'],
      ['rotation', 'Rotation 01 (Random 3D)'], ['shape', 'Shape 01 (Tetra)'], ['display', 'Display 01 (Ticks)', '#0c4a28'],
      ['force', 'Force 01 (Wind01)'], ['test', 'Age Test 01 (Age>20±5)'],
    ],
  },
  { title: 'Event 02', x: 394, y: 653, h: 64, ops: [['test', 'Spawn 01 (Once)'], ['display', 'Display 02 (Ticks)', '#d09ae0'], ['test', 'Collision 01 (Deflector01)']] },
  { title: 'Event 03', x: 369, y: 740, h: 63, sel: true, ops: [['force', 'Force 02 (Gravity01)'], ['shape', 'Shape 02 (Tetra)'], ['display', 'Display 03 (Ticks)', '#1c2a80']] },
];
const Wires = styled.svg`
  position: absolute;
  inset: 0;
`;
const Depot = styled.div`
  display: flex;
  flex-direction: column;
  border: 1px solid;
  border-color: ${C.dark} #fff #fff ${C.dark};
  box-shadow: inset 0 1px #444;
  background: #fff;
`;
const DepotList = styled.div`
  display: grid;
  grid-template-columns: repeat(5, 112px);
  height: 23px;
  overflow: hidden;
  padding: 0 0 4px 1px;
`;
const DepotItem = styled.span`
  display: flex;
  align-items: center;
  gap: 2px;
  white-space: nowrap;
`;
const Scroll = styled.div`
  display: grid;
  grid-template-columns: 16px 46px 1fr 16px;
  height: 16px;
  background: repeating-conic-gradient(#fff 0 25%, #dcd9d2 0 50%) 0 0 / 2px 2px;
`;
const ScrollPart = styled.button`
  ${classic}
  display: grid;
  place-items: center;
  padding: 0;
`;
const Describe = styled.fieldset`
  margin: 0 1px 0 0;
  padding: 0 6px;
  border: 1px solid ${C.dark};
  legend { padding: 0 2px; margin: 0; line-height: 14px; }
`;
const PvStatus = styled.div`
  grid-column: 1 / -1;
  display: flex;
  align-items: center;
`;
const PvHint = styled.div`
  ${sunken}
  flex: 0 0 577px;
  height: 22px;
  margin-right: 4px;
`;
const PvTool = styled.button`
  display: grid;
  place-items: center;
  width: 22px;
  height: 20px;
  padding: 0;
  border: 0;
  background: none;
`;

const ParticleView = () => (
  <Floating>
    <TitleBar as="div">
      <Icon name="max" s={16} />
      <TitleText as="h2">Particle View</TitleText>
      <CapGroup>
        <CapButton aria-label="Minimize"><Min /></CapButton>
        <CapButton aria-label="Maximize"><Max /></CapButton>
        <CapButton $gap aria-label="Close"><Close /></CapButton>
      </CapGroup>
    </TitleBar>
    <MenuBar $gap={10}>
      {['Edit', 'Select', 'Display', 'Options'].map((m) => <MenuItem key={m}>{m}</MenuItem>)}
    </MenuBar>
    <PvBody>
      <Canvas>
        {nodes.map((n) => (
          <NodeBox key={n.title} $x={n.x} $y={n.y} $h={n.h} $sel={n.sel}>
            <NodeHead $sel={n.sel}>{n.title}<Icon name="bulb" s={12} /></NodeHead>
            <NodeRows>
              {n.ops.map(([icon, text, color]) => (
                <NodeRow key={text}><OpIcon n={icon} /><span>{text}</span>{color && <Dot $c={color} />}</NodeRow>
              ))}
            </NodeRows>
          </NodeBox>
        ))}
        <Wires viewBox="25 618 511 268" width="511" height="268" fill="none" stroke="#000">
          <path d="M234.500 641v22M405.500 644v23M380.500 731v23" />
          <path d="M230.500 645.500h8v4h-8zM401.500 648.500h8v4h-8zM376.500 734.500h8v4h-8z" fill="#6a6a6a" />
          <path d="M72.500 674.500h8v5h-8zM76.500 674v9M218.500 785.500h5v6h-5zM389.500 671.500h5v6h-5zM389.500 704.500h5v6h-5zM385 707.500h15" />
          <g stroke={C.wire}>
            <path d="M76 683.500h77.500V636.500H222" strokeDasharray="4 2" />
            <path d="M214.500 788V639.500H394M385 707.500h-4.500V716" />
          </g>
          <g fill={C.wire} stroke="none">
            <circle cx="76" cy="683.500" r="2" /><circle cx="214" cy="788" r="2" /><circle cx="385" cy="674" r="2" /><circle cx="385" cy="707.500" r="2" />
            <path d="M222 634v5l7-2.500zM393 637v5l7-2.500zM378 713h5l-2.500 7z" />
          </g>
          <circle cx="234.500" cy="636" r="5" fill="#c8c8c8" /><circle cx="405.500" cy="639" r="5" fill="#c8c8c8" /><circle cx="380.500" cy="726" r="5" fill="#c8c8c8" />
        </Wires>
      </Canvas>
      <Side />
      <Depot>
        <DepotList>
          <DepotItem><Icon name="flow" s={16} />Empty Flow</DepotItem>
          <DepotItem><Icon name="flow" s={16} />Standard Flow</DepotItem>
          <DepotItem><Icon name="birth" s={16} />Birth</DepotItem>
          <DepotItem><Icon name="script" s={16} />Birth Script</DepotItem>
          <DepotItem><Icon name="del" s={15} />Delete</DepotItem>
        </DepotList>
        <Scroll>
          <ScrollPart aria-label="Scroll left"><svg width="4" height="7"><path d="M4 0v7L0 3.500z" /></svg></ScrollPart>
          <ScrollPart aria-label="Scroll thumb" />
          <span />
          <ScrollPart aria-label="Scroll right"><svg width="4" height="7"><path d="M0 0v7l4-3.500z" /></svg></ScrollPart>
        </Scroll>
      </Depot>
      <Describe><legend>Description:</legend></Describe>
      <PvStatus>
        <PvHint />
        {['hand', 'mag', 'magrect', 'fit', 'nozoom'].map((n) => <PvTool key={n} aria-label={n}><Icon name={n} s={16} /></PvTool>)}
      </PvStatus>
    </PvBody>
  </Floating>
);

/* ---------- status area ---------- */
const Footer = styled.footer`
  display: flex;
  height: 51px;
  padding: 4px 3px 2px 2px;
`;
const Listener = styled.div`
  display: flex;
  flex-direction: column;
  flex: 0 0 298px;
  gap: 2px;
`;
const Script = styled.input<{ $c: string }>`
  ${sunken}
  width: 100%;
  height: 22px;
  padding: 0 2px;
  box-shadow: inset 1px 1px #444;
  background: ${(p) => p.$c};
`;
const Middle = styled.div`
  flex: 1;
  display: grid;
  grid-template-columns: 1fr 99px;
  grid-template-rows: 22px 20px;
  gap: 4px 3px;
  min-width: 0;
`;
const Coord = styled.div`
  display: flex;
  align-items: center;
  gap: 3px;
  min-width: 0;
`;
const Readout = styled.output<{ $w?: number }>`
  ${sunken}
  display: flex;
  align-items: center;
  width: ${(p) => (p.$w ? `${p.$w}px` : 'auto')};
  height: 100%;
  padding-left: 5px;
  white-space: nowrap;
`;
const Cluster = styled.div<{ $cols: string; $ml?: number; $rows?: string }>`
  display: grid;
  grid-template-columns: ${(p) => p.$cols};
  grid-template-rows: ${(p) => p.$rows ?? '21px 21px'};
  row-gap: 2px;
  column-gap: 4px;
  margin-left: ${(p) => p.$ml ?? 4}px;
`;
const Block = styled.button`
  ${raised}
  display: grid;
  place-items: center;
  padding: 0;
  background: none;
  white-space: nowrap;
`;
const Strip = styled.div`
  display: flex;
  align-items: center;
`;
const StatusArea = () => (
  <Footer>
    <Listener>
      <Script $c="#dfc3c6" aria-label="Macro recorder" />
      <Script $c="#fff" aria-label="MAXScript listener" />
    </Listener>
    <Sep $h={46} />
    <Middle>
      <Coord>
        <Readout $w={128}>1 Object Selected</Readout>
        <ToolButton aria-label="Lock selection"><Icon name="lock" s={14} /></ToolButton>
        <ToolButton aria-label="Absolute mode"><Icon name="absrel" s={16} /></ToolButton>
        {[['X', '58.145'], ['Y', '0.222'], ['Z', '0.0']].map(([k, v]) => (
          <Coord key={k}>
            <label htmlFor={k}>{k}:</label>
            <Field id={k} $w={52} $h={20} defaultValue={v} />
            <Spin />
          </Coord>
        ))}
      </Coord>
      <Readout>Grid = 10.0</Readout>
      <Readout>Click and drag to select and move objects</Readout>
      <Readout>Add Time Tag</Readout>
    </Middle>
    <Cluster $cols="43px" $ml={2} $rows="44px"><Block aria-label="Set keys"><Icon name="key" s={26} /></Block></Cluster>
    <Cluster $cols="47px 115px">
      <Block>Auto Key</Block>
      <Select label="Key mode" value="Selected" h={21} />
      <Block>Set Key</Block>
      <Block>Key Filters...</Block>
    </Cluster>
    <Cluster $cols="122px" $ml={6}>
      <Strip>
        <ToolButton $w={22} aria-label="Go to start"><Icon name="first" /></ToolButton><Sep />
        <ToolButton $w={22} aria-label="Previous frame"><Icon name="prev" s={16} /></ToolButton>
        <ToolButton $w={22} aria-label="Play"><Icon name="play" /></ToolButton>
        <ToolButton $w={22} aria-label="Next frame"><Icon name="next" s={16} /></ToolButton><Sep />
        <ToolButton $w={22} aria-label="Go to end"><Icon name="last" /></ToolButton>
      </Strip>
      <Strip>
        <ToolButton $w={22} aria-label="Key mode toggle"><Icon name="keymode" s={14} /></ToolButton>
        <Field $w={69} $h={20} defaultValue="133" aria-label="Current frame" /><Sep />
        <ToolButton $w={22} aria-label="Time configuration"><Icon name="time" s={16} /></ToolButton>
      </Strip>
    </Cluster>
    <Sep $h={44} />
    <Cluster $cols="92px" $ml={0}>
      <Strip>{['mag', 'magall', 'extents', 'extall'].map((n) => <ToolButton key={n} aria-label={n}><Icon name={n} s={17} /></ToolButton>)}</Strip>
      <Strip>{['fov', 'hand', 'arc', 'maximize'].map((n) => <ToolButton key={n} aria-label={n}><Icon name={n} s={17} /></ToolButton>)}</Strip>
    </Cluster>
  </Footer>
);

/* ---------- taskbar ---------- */
const TaskBar = styled.nav`
  display: flex;
  align-items: center;
  gap: 3px;
  height: 28px;
  padding: 0 3px 0 2px;
  border-top: 1px solid #fff;
  background: ${C.shell};
  font: 11px/14px ${shellFont};
`;
const TaskButton = styled.button<{ $on?: boolean; $w?: number }>`
  ${classic}
  display: flex;
  align-items: center;
  gap: 2px;
  width: ${(p) => p.$w ?? 74}px;
  height: 22px;
  padding: 0 2px 0 3px;
  overflow: hidden;
  white-space: nowrap;
  font-weight: ${(p) => (p.$on || p.$w ? 'bold' : 'normal')};
  ${(p) => p.$on && css`
    background: #ecebe7;
    border-color: #404040 #fff #fff #404040;
    box-shadow: inset 1px 1px #808080;
  `}
`;
const Quick = styled.div`
  display: flex;
  gap: 7px;
  padding: 0 7px 0 6px;
`;
const Tray = styled.div`
  display: flex;
  align-items: center;
  gap: 2px;
  flex: 0 0 291px;
  height: 22px;
  margin-left: auto;
  padding: 0 14px 0 3px;
  border: 1px solid;
  border-color: #808080 #fff #fff #808080;
`;
const Lang = styled.span`
  padding: 1px 2px;
  background: #0a0a78;
  color: #fff;
`;
const Clock = styled.time`
  margin-left: auto;
  white-space: nowrap;
`;
const tasks: [string, string][] = [
  ['butterfly', 'GhostTr...'], ['mail', 'Re: VSS...'], ['source', 'Visual S...'], ['max', 'pe04....'], ['folder', 'H:\\3ds...'],
  ['ftp', 'ftp://w...'], ['web', 'Edit Ent...'], ['moz', 'Bookma...'], ['web', 'Upload ...'], ['paint', 'Paint S...'],
];

const menus = ['File', 'Edit', 'Tools', 'Group', 'Views', 'Create', 'Modifiers', 'Character', 'reactor', 'Animation', 'Graph Editors', 'Rendering', 'Customize', 'MAXScript', 'Help'];
const Tools = ({ names, on }: { names: string[]; on?: string }) => (
  <>{names.map((n) => <ToolButton key={n} $on={n === on} aria-label={n}><Icon name={n} /></ToolButton>)}</>
);

export default function App() {
  return (
    <Page>
      <Global />
      <TitleBar>
        <Icon name="max" s={16} />
        <TitleText>pe04.max - 3ds max 6 - Not for Resale - Stand-alone License</TitleText>
        <CapGroup>
          <CapButton aria-label="Minimize"><Min /></CapButton>
          <CapButton aria-label="Restore"><Restore /></CapButton>
          <CapButton $gap aria-label="Close"><Close /></CapButton>
        </CapGroup>
      </TitleBar>
      <MenuBar $gap={11}>
        {menus.map((m) => <MenuItem key={m}>{m}</MenuItem>)}
      </MenuBar>
      <ToolRow>
        <Toolbar>
          <Grip />
          <Tools names={['undo', 'redo']} /><Sep />
          <Tools names={['link', 'unlink', 'bind']} /><Sep />
          <Select label="Selection filter" value="All" w={70} h={21} />
          <Tools names={['arrow', 'byname', 'rect', 'crossing']} /><Sep />
          <Tools names={['move', 'rotate', 'scale']} on="move" />
          <Select label="Reference coordinates" value="View" w={69} h={21} />
          <Tools names={['pivot']} /><Sep />
          <Tools names={['manip']} /><Sep />
          <Tools names={['snap', 'angle', 'percent', 'spinsnap']} /><Sep />
          <Tools names={['abc']} />
          <Select label="Named selection sets" value="" w={119} h={21} /><Sep />
          <Tools names={['mirror', 'align']} /><Sep />
          <Tools names={['layers']} /><Sep />
          <Tools names={['curve', 'schem']} /><Sep />
          <Tools names={['material']} /><Sep />
          <Tools names={['render']} />
          <Select label="Render view" value="View" w={79} h={21} />
          <Tools names={['teapot']} />
        </Toolbar>
      </ToolRow>
      <Main>
        <Stage>
          <Viewport>
            <SceneDrawing />
            <ViewLabel>Perspective</ViewLabel>
          </Viewport>
          <TimeRuler />
        </Stage>
        <CommandPanel />
      </Main>
      <StatusArea />
      <TaskBar>
        <TaskButton $w={55}><Icon name="windows" s={16} />Start</TaskButton>
        <Sep $h={20} />
        <Quick>
          {['note', 'ie', 'horse', 'bolt', 'pad'].map((n) => <Icon key={n} name={n} s={16} />)}
        </Quick>
        <Sep $h={20} />
        {tasks.map(([icon, text]) => (
          <TaskButton key={text} $on={icon === 'max'}><Icon name={icon} s={16} />{text}</TaskButton>
        ))}
        <Tray>
          {['shield', 'bolt', 'net', 'speaker'].map((n) => <Icon key={n} name={n} s={16} />)}
          <Lang>EN</Lang>
          {['nvidia', 'quick', 'swirl', 'meter', 'person', 'horse', 'inbox'].map((n) => <Icon key={n} name={n} s={16} />)}
          <Clock>3:50 PM</Clock>
        </Tray>
      </TaskBar>
      <ParticleView />
    </Page>
  );
}
